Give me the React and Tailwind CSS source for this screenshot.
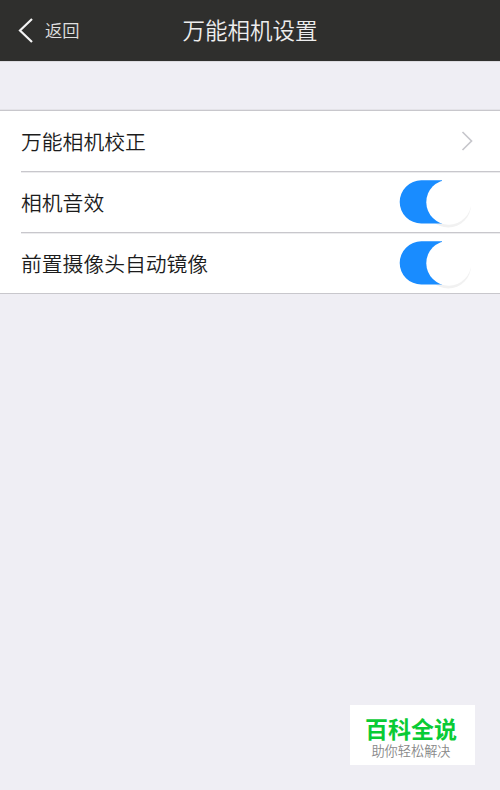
import React from 'react';

function Toggle() {
  return (
    <svg className="block shrink-0" width="76" height="56" viewBox="0 0 76 56" role="switch" aria-checked="true">
      <circle cx="52.3" cy="30.8" r="22.7" fill="#f1f1f1" />
      <path d="M25.3 6.3H46v43.2H25.3A21.6 21.6 0 0 1 25.3 6.3Z" fill="#198cff" />
      <circle cx="52.8" cy="28.2" r="22.5" fill="#fff" />
    </svg>
  );
}

function Row({ label, last, children }) {
  return (
    <div className="pl-[21px]">
      <div className={`flex items-center justify-between ${last ? 'h-[60px]' : 'h-[61px] border-b border-[#c8c7cc] shadow-[0_1px_0_#ececee]'}`}>
        <span className="pb-px text-[20.8px] leading-[30px] font-[350] text-[#1c1c1c]">{label}</span>
        {children}
      </div>
    </div>
  );
}

export default function App() {
  return (
    <div className="flex h-[790px] w-[500px] flex-col overflow-hidden bg-[#efeef4] font-['Noto_Sans_CJK_SC',sans-serif]">
      <header className="grid h-[61px] shrink-0 grid-cols-[1fr_auto_1fr] items-center bg-[#2f2f2d] shadow-[0_1px_0_#dcdbe0]">
        <button className="flex items-center gap-[11px] pl-[18px]">
          <svg width="16" height="26" viewBox="0 0 16 26" fill="none" stroke="#f4f4f4" strokeWidth="2.2">
            <path d="M14 1 2 12.5l12 11.5" />
          </svg>
          <span className="pb-px text-[17.3px] leading-[26px] font-[350] text-[#e0e0e0]">返回</span>
        </button>
        <h1 className="pb-[3px] text-[22.5px] leading-[32px] font-[350] text-[#ededed]">万能相机设置</h1>
      </header>
      <main className="mt-[49px] border-y border-[#c8c7cc] bg-white shadow-[0_-1px_0_#e4e3e8]">
        <Row label="万能相机校正">
          <svg className="mr-[27px]" width="12" height="20" viewBox="0 0 12 20" fill="none" stroke="#c7c7cc" strokeWidth="1.7">
            <path d="m1.5 1 9 9-9 9" />
          </svg>
        </Row>
        <Row label="相机音效">
          <div className="mr-[28px]"><Toggle /></div>
        </Row>
        <Row label="前置摄像头自动镜像" last>
          <div className="mr-[28px]"><Toggle /></div>
        </Row>
      </main>
      <footer className="mt-auto mr-[25px] mb-[25px] flex h-[60px] w-[125px] flex-col items-center self-end bg-white pt-[9px] pr-[3px]">
        <strong className="text-[23px] leading-[29px] font-bold text-[#09cb35]">百科全说</strong>
        <span className="text-[13.2px] leading-[16px] font-[350] text-[#888]">助你轻松解决</span>
      </footer>
    </div>
  );
}
